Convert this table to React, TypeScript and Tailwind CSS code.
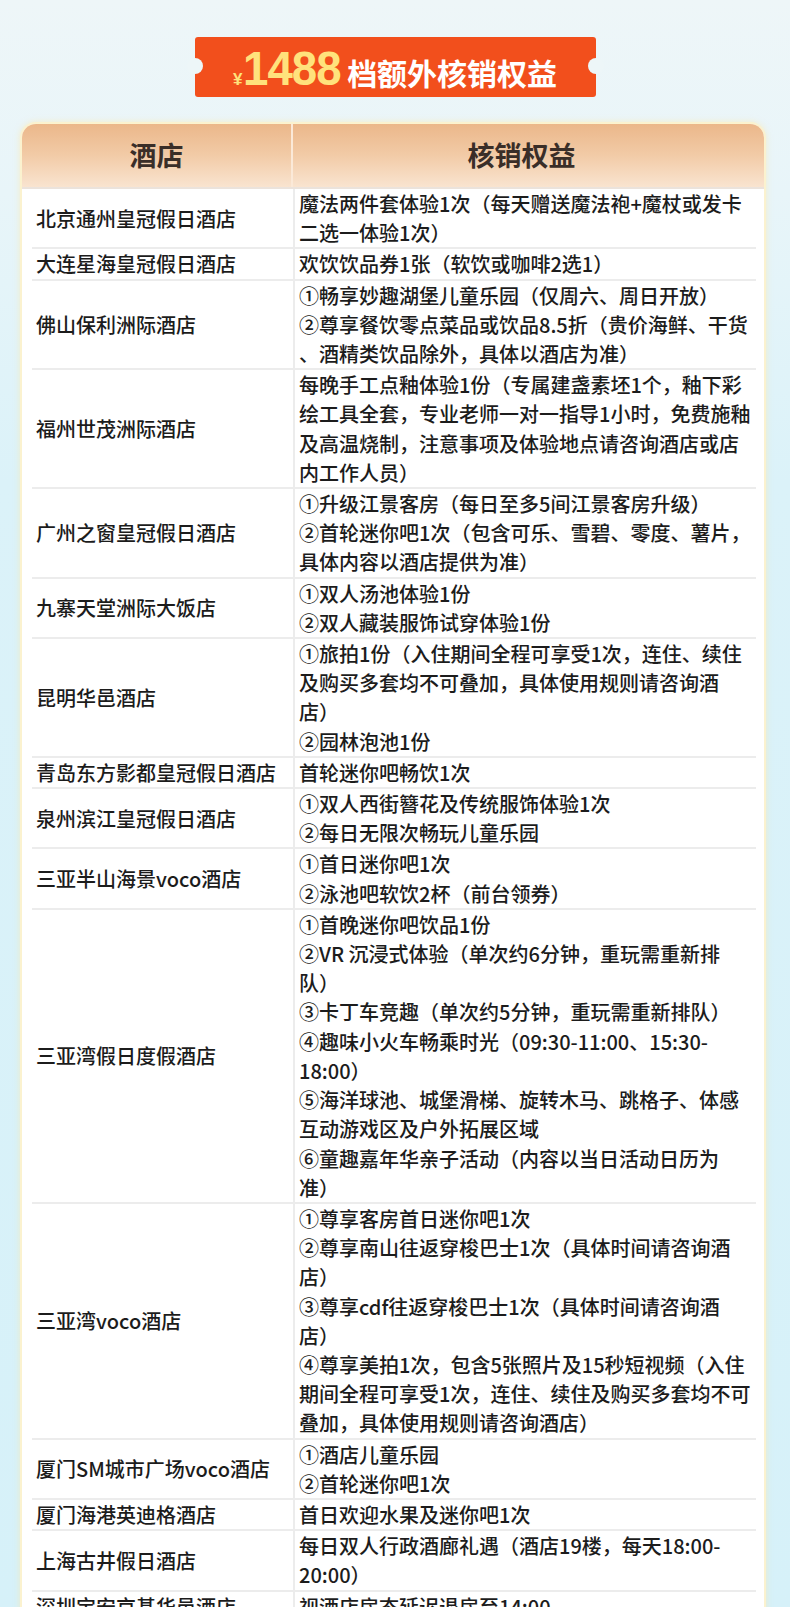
import React from "react";

type Row = { hotel: string; lines: string[] };

const rows: Row[] = [
  {
    hotel: "北京通州皇冠假日酒店",
    lines: ["魔法两件套体验1次（每天赠送魔法袍+魔杖或发卡", "二选一体验1次）"],
  },
  { hotel: "大连星海皇冠假日酒店", lines: ["欢饮饮品券1张（软饮或咖啡2选1）"] },
  {
    hotel: "佛山保利洲际酒店",
    lines: [
      "①畅享妙趣湖堡儿童乐园（仅周六、周日开放）",
      "②尊享餐饮零点菜品或饮品8.5折（贵价海鲜、干货",
      "、酒精类饮品除外，具体以酒店为准）",
    ],
  },
  {
    hotel: "福州世茂洲际酒店",
    lines: [
      "每晚手工点釉体验1份（专属建盏素坯1个，釉下彩",
      "绘工具全套，专业老师一对一指导1小时，免费施釉",
      "及高温烧制，注意事项及体验地点请咨询酒店或店",
      "内工作人员）",
    ],
  },
  {
    hotel: "广州之窗皇冠假日酒店",
    lines: [
      "①升级江景客房（每日至多5间江景客房升级）",
      "②首轮迷你吧1次（包含可乐、雪碧、零度、薯片，",
      "具体内容以酒店提供为准）",
    ],
  },
  { hotel: "九寨天堂洲际大饭店", lines: ["①双人汤池体验1份", "②双人藏装服饰试穿体验1份"] },
  {
    hotel: "昆明华邑酒店",
    lines: [
      "①旅拍1份（入住期间全程可享受1次，连住、续住",
      "及购买多套均不可叠加，具体使用规则请咨询酒",
      "店）",
      "②园林泡池1份",
    ],
  },
  { hotel: "青岛东方影都皇冠假日酒店", lines: ["首轮迷你吧畅饮1次"] },
  {
    hotel: "泉州滨江皇冠假日酒店",
    lines: ["①双人西街簪花及传统服饰体验1次", "②每日无限次畅玩儿童乐园"],
  },
  { hotel: "三亚半山海景voco酒店", lines: ["①首日迷你吧1次", "②泳池吧软饮2杯（前台领券）"] },
  {
    hotel: "三亚湾假日度假酒店",
    lines: [
      "①首晚迷你吧饮品1份",
      "②VR 沉浸式体验（单次约6分钟，重玩需重新排",
      "队）",
      "③卡丁车竞趣（单次约5分钟，重玩需重新排队）",
      "④趣味小火车畅乘时光（09:30-11:00、15:30-",
      "18:00）",
      "⑤海洋球池、城堡滑梯、旋转木马、跳格子、体感",
      "互动游戏区及户外拓展区域",
      "⑥童趣嘉年华亲子活动（内容以当日活动日历为",
      "准）",
    ],
  },
  {
    hotel: "三亚湾voco酒店",
    lines: [
      "①尊享客房首日迷你吧1次",
      "②尊享南山往返穿梭巴士1次（具体时间请咨询酒",
      "店）",
      "③尊享cdf往返穿梭巴士1次（具体时间请咨询酒",
      "店）",
      "④尊享美拍1次，包含5张照片及15秒短视频（入住",
      "期间全程可享受1次，连住、续住及购买多套均不可",
      "叠加，具体使用规则请咨询酒店）",
    ],
  },
  { hotel: "厦门SM城市广场voco酒店", lines: ["①酒店儿童乐园", "②首轮迷你吧1次"] },
  { hotel: "厦门海港英迪格酒店", lines: ["首日欢迎水果及迷你吧1次"] },
  {
    hotel: "上海古井假日酒店",
    lines: ["每日双人行政酒廊礼遇（酒店19楼，每天18:00-", "20:00）"],
  },
  { hotel: "深圳宝安京基华邑酒店", lines: ["视酒店房态延迟退房至14:00"] },
];

const cjk = "font-['Noto_Sans_CJK_SC','Noto_Sans',sans-serif]";

function Ticket() {
  return (
    <div className="relative mx-auto flex h-[60px] w-[401px] items-center justify-center rounded-[3px] bg-[#f24f1c]">
      {/* notches */}
      <span className="absolute top-[21px] left-[-8px] h-[16px] w-[16px] rounded-full bg-[#edf6f8]" />
      <span className="absolute top-[21px] right-[-8px] h-[16px] w-[16px] rounded-full bg-[#edf6f8]" />
      <div className="flex items-baseline pt-[4px]">
        <span className="mr-[1px] font-['Liberation_Sans',sans-serif] text-[17px] font-bold text-[#ffe27c]">¥</span>
        <span className="inline-block origin-left scale-x-[0.95] font-['Liberation_Sans',sans-serif] text-[48px] leading-none font-bold tracking-[-1px] text-[#ffe27c]">
          1488
        </span>
        <span className={`${cjk} ml-[1px] text-[30px] leading-none font-bold text-white`}>档额外核销权益</span>
      </div>
    </div>
  );
}

export default function App() {
  return (
    <div
      className={`${cjk} h-[1607px] w-full overflow-hidden bg-[linear-gradient(180deg,#eef6f8_0%,#e8f5f9_12%,#dbf2f9_30%,#d6f1f9_100%)] pt-[37px]`}
    >
      <Ticket />

      <div className="mt-[25px] ml-[20px] w-[746px] overflow-hidden rounded-t-[16px] border-2 border-[#fbf2cf] bg-white shadow-[0_0_6px_rgba(255,230,160,0.55)]">
        {/* table head */}
        <div className="grid h-[65px] grid-cols-[271px_1fr] border-b-2 border-[#ebe3dc] bg-[linear-gradient(180deg,#ebb78a_0%,#f2cba7_50%,#f9e4d0_100%)]">
          <div className="flex items-center justify-center border-r-2 border-[#fbe9d8] text-[27px] font-bold text-[#3a2e28]">
            酒店
          </div>
          <div className="flex items-center justify-center pr-[14px] text-[27px] font-bold text-[#3a2e28]">核销权益</div>
        </div>

        {/* table body */}
        <div className="pr-[8px] pl-[10px]">
          {rows.map((r) => (
            <div key={r.hotel} className="grid grid-cols-[261px_1fr] border-b-2 border-[#ececec]">
              <div className="flex items-center pl-[4px] text-[20px] leading-[29.2px] font-medium text-[#1c1c1c]">
                {r.hotel}
              </div>
              <div className="border-l-2 border-[#ececec] pl-[4px] text-[20px] leading-[29.2px] font-medium text-[#1c1c1c]">
                {r.lines.map((l, i) => (
                  <div key={i} className="whitespace-nowrap">
                    {l}
                  </div>
                ))}
              </div>
            </div>
          ))}
        </div>
      </div>
    </div>
  );
}
